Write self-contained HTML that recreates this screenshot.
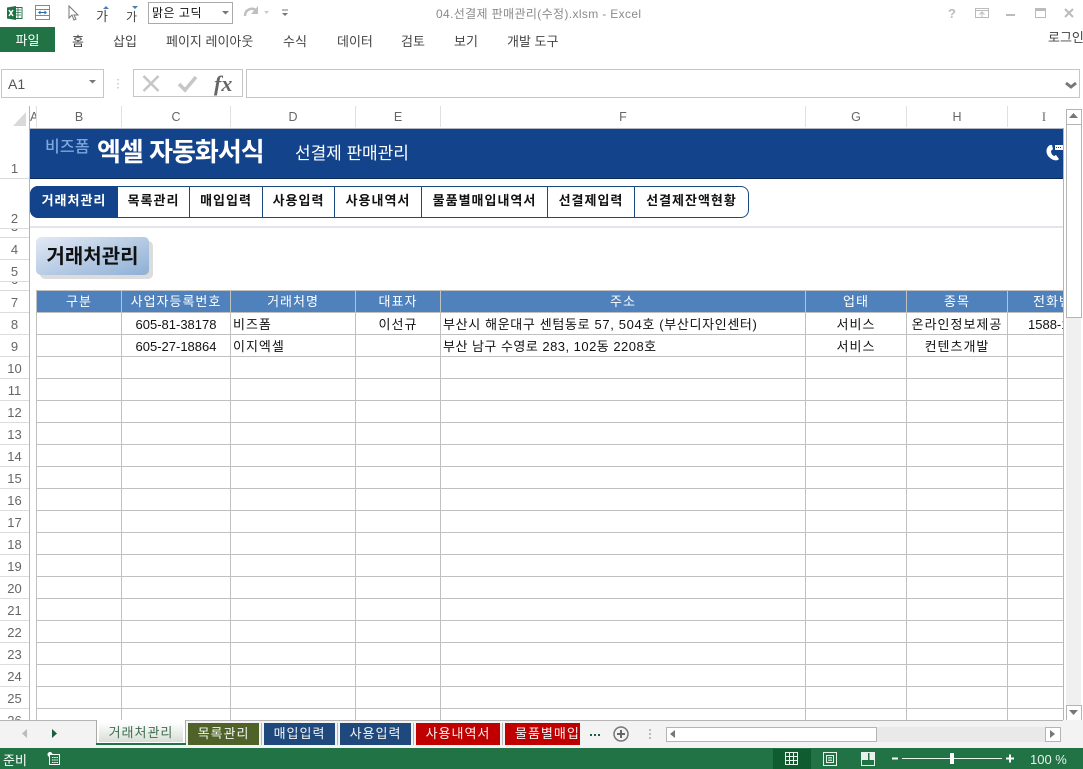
<!DOCTYPE html>
<html lang="ko"><head><meta charset="utf-8"><title>Excel</title>
<style>
html,body{margin:0;padding:0;background:#fff}
#p{position:relative;width:1083px;height:769px;overflow:hidden;background:#fff;font-family:"Liberation Sans","Noto Sans CJK KR",sans-serif;font-size:12px;color:#444}
#p div{position:absolute;white-space:nowrap}
.r{top:33px;font-size:13px;line-height:17px;color:#444}
.ch{top:106px;height:21px;line-height:22px;text-align:center;color:#666;font-size:12.5px;border-right:1px solid #e0e0e0;box-sizing:border-box}
.rh{left:0;width:29px;text-align:center;color:#666;font-size:13px;line-height:24px;height:22px;border-bottom:1px solid #dcdcdc;box-sizing:border-box}
.h{top:291px;height:21px;line-height:22px;background:#4f81bd;color:#fff;text-align:center;font-size:13px;letter-spacing:1px;box-sizing:border-box;overflow:hidden}
.c{height:21px;line-height:21px;color:#111;font-size:13px;letter-spacing:1px;overflow:hidden}
.d{letter-spacing:.55px}
.n{top:187px;height:30px;line-height:28px;text-align:center;font-weight:700;font-size:13px;color:#111;letter-spacing:1px;box-sizing:border-box;border-right:1px solid #1a4a80}
.t{top:723px;height:22px;line-height:22px;color:#f4f4f4;text-align:center;font-size:13px;letter-spacing:1px;overflow:hidden}
.g{top:290px;width:1px;height:430px;background:#c0c0c0}
.sp{top:723px;width:1px;height:22px;background:#b8b8b8}
</style></head><body><div id="p">

<!-- quick access -->
<svg style="position:absolute;left:0;top:0" width="300" height="27" xmlns="http://www.w3.org/2000/svg">
<path d="M14 7.500h8v11h-8z" fill="#fff" stroke="#217346"/><path d="M15 10h6M15 12.500h6M15 15h6M18 8v10" stroke="#217346" stroke-width=".8"/>
<path d="M7 7.500l9-1.500v14l-9-1.500z" fill="#1e7145"/>
<path d="M9 10l4 6M13 10l-4 6" stroke="#fff" stroke-width="1.500"/>
<rect x="35.500" y="5.500" width="14" height="14" fill="none" stroke="#888"/><path d="M35 9.500h15M35 15.500h15" stroke="#888"/><path d="M39 12.500h7" stroke="#2b6ca8"/><path d="M38 12.500l2.500-2v4zM47 12.500l-2.500-2v4z" fill="#2b6ca8"/>
<path d="M69 6v12l3-3 2 5 2-1-2-4h4z" fill="#fff" stroke="#777"/>
<path d="M106 6l3 3h-6zM135 9l3-3h-6z" fill="#4a7db5"/>
<path d="M245 16c0-6 6-9 11-6" fill="none" stroke="#c0c0c0" stroke-width="2.500"/><path d="M258 6v8h-7z" fill="#c0c0c0"/><path d="M264 11h5l-2.500 3z" fill="#ccc"/>
<path d="M282 10h6" stroke="#777"/><path d="M282 13h6l-3 3z" fill="#777"/>
</svg>
<div style="left:96px;top:8px;font-size:13px;line-height:17px;color:#444">가</div>
<div style="left:126px;top:9px;font-size:12px;line-height:16px;color:#444">가</div>
<div style="left:148px;top:2px;width:83px;height:20px;border:1px solid #aaa;background:#fff;line-height:21px;color:#111;font-size:12px;text-indent:3px;letter-spacing:.5px">맑은 고딕</div>
<svg style="position:absolute;left:222px;top:10px" width="8" height="6"><path d="M0 1h7l-3.500 3.500z" fill="#777"/></svg>
<div style="left:436px;top:6px;color:#8a8a8a;font-size:12px;line-height:16px;letter-spacing:.36px">04.선결제 판매관리(수정).xlsm - Excel</div>

<!-- window buttons -->
<svg style="position:absolute;left:940px;top:3px" width="143" height="22" xmlns="http://www.w3.org/2000/svg">
<text x="8" y="15" font-family="Liberation Sans" font-weight="700" font-size="13" fill="#bbb">?</text>
<rect x="35.500" y="5.500" width="13" height="9" fill="none" stroke="#bbb"/><path d="M35 7.500h14" stroke="#bbb"/><path d="M42 14v-4.500M39.500 11.500l2.500-2.500 2.500 2.500" fill="none" stroke="#bbb"/>
<path d="M66 12h9" stroke="#bbb" stroke-width="2"/>
<rect x="95.500" y="5.500" width="10" height="9" fill="none" stroke="#bbb"/><path d="M95 7h11" stroke="#bbb" stroke-width="2"/>
<path d="M125 6l8 8M133 6l-8 8" stroke="#bbb" stroke-width="2"/>
</svg>

<!-- ribbon tabs -->
<div style="left:0;top:27px;width:55px;height:25px;background:#217346;color:#fff;line-height:27px;text-align:center;font-size:13px">파일</div>
<div class="r" style="left:72px">홈</div>
<div class="r" style="left:113px">삽입</div>
<div class="r" style="left:166px">페이지 레이아웃</div>
<div class="r" style="left:283px">수식</div>
<div class="r" style="left:337px">데이터</div>
<div class="r" style="left:401px">검토</div>
<div class="r" style="left:454px">보기</div>
<div class="r" style="left:507px">개발 도구</div>
<div style="left:1048px;top:29px;font-size:13px;line-height:17px;color:#444;width:35px;overflow:hidden">로그인</div>

<!-- formula bar -->
<div style="left:1px;top:69px;width:101px;height:27px;border:1px solid #c6c6c6;line-height:28px;text-indent:6px;font-size:14px;color:#555">A1</div>
<svg style="position:absolute;left:88px;top:79px" width="10" height="6"><path d="M1 1h7l-3.500 3.500z" fill="#777"/></svg>
<svg style="position:absolute;left:110px;top:69px" width="135" height="29" xmlns="http://www.w3.org/2000/svg">
<path d="M8 10v1.500M8 14v1.500M8 18v1.500" stroke="#aaa"/>
<rect x="23.500" y=".5" width="109" height="27" fill="#fff" stroke="#c6c6c6"/>
<path d="M33.500 7l15 15M48.500 7l-15 15" stroke="#c6c6c6" stroke-width="2.500"/>
<path d="M69 15l6 6 11-13" fill="none" stroke="#c6c6c6" stroke-width="3.500"/>
<text x="104" y="22" font-family="Liberation Serif" font-style="italic" font-weight="700" font-size="22" fill="#666">fx</text>
</svg>
<div style="left:246px;top:69px;width:832px;height:27px;border:1px solid #c6c6c6"></div>
<svg style="position:absolute;left:1064px;top:81px" width="14" height="10"><path d="M2 2l5 4 5-4" fill="none" stroke="#777" stroke-width="3"/></svg>

<!-- column headers -->
<svg style="position:absolute;left:13px;top:111px" width="15" height="16"><path d="M13 1v14H0z" fill="#d9d9d9"/></svg>
<div style="left:29px;top:106px;width:1px;height:614px;background:#b5b5b5"></div>
<div class="ch" style="left:30px;width:7px;overflow:hidden;text-align:left">A</div>
<div class="ch" style="left:37px;width:85px">B</div>
<div class="ch" style="left:122px;width:109px">C</div>
<div class="ch" style="left:231px;width:125px">D</div>
<div class="ch" style="left:356px;width:85px">E</div>
<div class="ch" style="left:441px;width:365px">F</div>
<div class="ch" style="left:806px;width:101px">G</div>
<div class="ch" style="left:907px;width:101px">H</div>
<div class="ch" style="left:1008px;width:55px;border:0;text-align:right;padding-right:17px;font-family:'Liberation Serif'">I</div>

<!-- row headers -->
<div class="rh" style="top:128px;height:51px;line-height:81px">1</div>
<div class="rh" style="top:179px;height:50px;line-height:80px">2</div>
<div class="rh" style="top:229px;height:9px;line-height:0;overflow:hidden"><span style="position:relative;top:-2px">3</span></div>
<div class="rh" style="top:238px">4</div>
<div class="rh" style="top:260px">5</div>
<div class="rh" style="top:282px;height:9px;line-height:0;overflow:hidden"><span style="position:relative;top:-2px">6</span></div>
<div class="rh" style="top:291px;line-height:23px">7</div>
<div class="rh" style="top:313px">8</div><div class="rh" style="top:335px">9</div><div class="rh" style="top:357px">10</div><div class="rh" style="top:379px">11</div><div class="rh" style="top:401px">12</div><div class="rh" style="top:423px">13</div><div class="rh" style="top:445px">14</div><div class="rh" style="top:467px">15</div><div class="rh" style="top:489px">16</div><div class="rh" style="top:511px">17</div><div class="rh" style="top:533px">18</div><div class="rh" style="top:555px">19</div><div class="rh" style="top:577px">20</div><div class="rh" style="top:599px">21</div><div class="rh" style="top:621px">22</div><div class="rh" style="top:643px">23</div><div class="rh" style="top:665px">24</div><div class="rh" style="top:687px">25</div>
<div class="rh" style="top:709px;height:11px;overflow:hidden;border:0">26</div>

<!-- banner -->
<div style="left:30px;top:128px;width:1033px;height:51px;background:#13438a;border-top:1px solid #b0b8c4;border-bottom:1px solid #0b2a5c;box-sizing:border-box"></div>
<div style="left:45px;top:137px;font-size:16px;line-height:21px;color:#7da6dc;font-weight:500;letter-spacing:.2px">비즈폼</div>
<div style="left:97px;top:135px;font-size:26px;line-height:34px;color:#fff;font-weight:700;letter-spacing:-1px">엑셀 자동화서식</div>
<div style="left:295px;top:143px;font-size:17px;line-height:22px;color:#fff;letter-spacing:-.05px">선결제 판매관리</div>
<svg style="position:absolute;left:1045px;top:144px" width="18" height="19" xmlns="http://www.w3.org/2000/svg"><path d="M5 1C0 4 1 10 4 13s6 4 9 3l1-1-3-4-2 1c-2-1-3-3-3-5l2-2-1-4z" fill="#fff"/><rect x="10" y="1" width="8" height="5" fill="#fff"/><path d="M11 3.500h6" stroke="#13438a" stroke-dasharray="1 1"/></svg>

<!-- nav -->
<div style="left:30px;top:186px;width:719px;height:32px;border:1px solid #1a4a80;border-radius:8px;box-sizing:border-box;background:#fff"></div>
<div class="n" style="left:30px;top:186px;height:32px;width:88px;background:#13438a;color:#fff;border-radius:8px 0 0 8px;line-height:30px;border:0">거래처관리</div>
<div class="n" style="left:118px;width:72px">목록관리</div>
<div class="n" style="left:190px;width:73px">매입입력</div>
<div class="n" style="left:263px;width:72px">사용입력</div>
<div class="n" style="left:335px;width:87px">사용내역서</div>
<div class="n" style="left:422px;width:126px">물품별매입내역서</div>
<div class="n" style="left:548px;width:87px">선결제입력</div>
<div class="n" style="left:635px;width:113px;border:0">선결제잔액현황</div>
<div style="left:30px;top:226px;width:1033px;height:2px;background:#e4e4ea"></div>

<!-- title -->
<div style="left:40px;top:241px;width:113px;height:38px;background:#dcdcdc;border-radius:5px"></div>
<div style="left:36px;top:237px;width:113px;height:38px;background:linear-gradient(160deg,#e2e9f4,#8eafd6);border-radius:5px;line-height:41px;text-align:center;font-size:20px;font-weight:700;color:#111">거래처관리</div>

<!-- table grid -->
<div style="left:36px;top:313px;width:1027px;height:407px;background-image:repeating-linear-gradient(to bottom,transparent 0,transparent 21px,#c0c0c0 21px,#c0c0c0 22px)"></div>
<div class="g" style="left:36px"></div>
<div class="g" style="left:121px"></div>
<div class="g" style="left:230px"></div>
<div class="g" style="left:355px"></div>
<div class="g" style="left:440px"></div>
<div class="g" style="left:805px"></div>
<div class="g" style="left:906px"></div>
<div class="g" style="left:1007px"></div>
<div style="left:36px;top:290px;width:1027px;height:1px;background:#c0c0c0"></div>
<div style="left:36px;top:312px;width:1027px;height:1px;background:#c0c0c0"></div>
<div style="left:1063px;top:128px;width:1px;height:592px;background:#b5b5b5"></div>

<div class="h" style="left:37px;width:84px">구분</div>
<div class="h" style="left:122px;width:108px">사업자등록번호</div>
<div class="h" style="left:231px;width:124px">거래처명</div>
<div class="h" style="left:356px;width:84px">대표자</div>
<div class="h" style="left:441px;width:364px">주소</div>
<div class="h" style="left:806px;width:100px">업태</div>
<div class="h" style="left:907px;width:100px">종목</div>
<div class="h" style="left:1008px;width:55px;text-align:left;padding-left:25px">전화번호</div>

<div class="c" style="left:122px;top:314px;width:108px;text-align:center;letter-spacing:0">605-81-38178</div>
<div class="c" style="left:233px;top:314px">비즈폼</div>
<div class="c" style="left:356px;top:314px;width:84px;text-align:center">이선규</div>
<div class="c d" style="left:443px;top:314px;letter-spacing:.65px">부산시 해운대구 센텀동로 57, 504호 (부산디자인센터)</div>
<div class="c" style="left:806px;top:314px;width:100px;text-align:center">서비스</div>
<div class="c" style="left:907px;top:314px;width:100px;text-align:center">온라인정보제공</div>
<div class="c" style="left:1028px;top:314px;width:35px;letter-spacing:0">1588-1234</div>
<div class="c" style="left:122px;top:336px;width:108px;text-align:center;letter-spacing:0">605-27-18864</div>
<div class="c" style="left:233px;top:336px">이지엑셀</div>
<div class="c d" style="left:443px;top:336px;letter-spacing:.48px">부산 남구 수영로 283, 102동 2208호</div>
<div class="c" style="left:806px;top:336px;width:100px;text-align:center">서비스</div>
<div class="c" style="left:907px;top:336px;width:100px;text-align:center">컨텐츠개발</div>

<!-- vertical scrollbar -->
<div style="left:1064px;top:106px;width:19px;height:614px;background:#fff"></div>
<div style="left:1066px;top:124px;width:15px;height:581px;background:#f0f0f0"></div>
<div style="left:1066px;top:109px;width:14px;height:14px;border:1px solid #b4b4b4;background:#fff"></div>
<svg style="position:absolute;left:1069px;top:113px" width="10" height="6"><path d="M4.500 0l4.500 5H0z" fill="#777"/></svg>
<div style="left:1066px;top:124px;width:14px;height:192px;border:1px solid #b4b4b4;background:#fff"></div>
<div style="left:1066px;top:705px;width:14px;height:14px;border:1px solid #b4b4b4;background:#fff"></div>
<svg style="position:absolute;left:1069px;top:710px" width="10" height="6"><path d="M0 0h9L4.500 5z" fill="#777"/></svg>

<!-- sheet tabs -->
<div style="left:0;top:720px;width:1083px;height:28px;background:#f3f3f3"></div>
<div style="left:0;top:720px;width:1063px;height:1px;background:#b5b5b5"></div>
<svg style="position:absolute;left:20px;top:728px" width="40" height="12"><path d="M7 1v9L2 5.500z" fill="#bbb"/><path d="M32 1v9l5-4.500z" fill="#17623a"/></svg>
<div style="left:96px;top:720px;width:90px;height:25px;background:#fff;border-left:1px solid #aaa;border-right:1px solid #aaa;box-sizing:border-box"></div>
<div class="t" style="left:99px;top:722px;width:84px;height:20px;line-height:22px;background:linear-gradient(#fff,#d7dfd5);color:#3f6b52">거래처관리</div>
<div style="left:96px;top:743px;width:90px;height:2px;background:#217346"></div>
<div class="t" style="left:188px;width:71px;background:#4f6228">목록관리</div>
<div class="sp" style="left:261px"></div>
<div class="t" style="left:264px;width:71px;background:#1f497d">매입입력</div>
<div class="sp" style="left:337px"></div>
<div class="t" style="left:340px;width:71px;background:#1f497d">사용입력</div>
<div class="sp" style="left:413px"></div>
<div class="t" style="left:416px;width:84px;background:#c00000">사용내역서</div>
<div class="sp" style="left:502px"></div>
<div class="t" style="left:505px;width:75px;background:#c00000;text-align:left;text-indent:10px">물품별매입</div>
<svg style="position:absolute;left:586px;top:725px" width="80" height="20" xmlns="http://www.w3.org/2000/svg">
<path d="M4 10h2M8 10h2M12 10h2" stroke="#17623a" stroke-width="2"/>
<circle cx="35" cy="9" r="7" fill="none" stroke="#777" stroke-width="1.500"/><path d="M31 9h8M35 5v8" stroke="#666" stroke-width="2"/>
<path d="M64 4v2M64 8v2M64 12v2" stroke="#aaa" stroke-width="1.500"/>
</svg>
<!-- horizontal scrollbar -->
<div style="left:666px;top:727px;width:394px;height:15px;background:#e9e9e9"></div>
<div style="left:666px;top:727px;width:14px;height:13px;border:1px solid #b4b4b4;background:#fff"></div>
<svg style="position:absolute;left:670px;top:730px" width="7" height="9"><path d="M5 0v8L0 4z" fill="#777"/></svg>
<div style="left:681px;top:727px;width:195px;height:13px;border:1px solid #b4b4b4;border-left:0;background:#fff"></div>
<div style="left:1045px;top:727px;width:14px;height:13px;border:1px solid #b4b4b4;background:#fff"></div>
<svg style="position:absolute;left:1050px;top:730px" width="7" height="9"><path d="M0 0v8l5-4z" fill="#777"/></svg>

<!-- status bar -->
<div style="left:0;top:748px;width:1083px;height:21px;background:#217346"></div>
<div style="left:3px;top:752px;color:#fff;font-size:13px;line-height:17px">준비</div>
<svg style="position:absolute;left:46px;top:751px" width="16" height="16" xmlns="http://www.w3.org/2000/svg"><circle cx="4" cy="3.500" r="2.500" fill="#fff"/><rect x="3.500" y="3.500" width="10" height="10" fill="#217346" stroke="#fff"/><path d="M6 6.500h6M6 9h6M6 11.500h6" stroke="#fff" stroke-dasharray="1.500 .7"/></svg>
<div style="left:773px;top:749px;width:38px;height:20px;background:#0f5c30"></div>
<svg style="position:absolute;left:780px;top:749px" width="300" height="20" xmlns="http://www.w3.org/2000/svg">
<path d="M5.500 3.500h12v12h-12zM5 7.500h13M5 11.500h13M9.500 3v13M13.500 3v13" fill="none" stroke="#e6f2ea"/>
<rect x="43.500" y="3.500" width="13" height="13" fill="none" stroke="#e6f2ea"/><rect x="46.500" y="6.500" width="7" height="7" fill="none" stroke="#e6f2ea"/><path d="M48 8.500h4M48 10h4M48 11.500h4" stroke="#e6f2ea" stroke-width=".8"/>
<rect x="81.500" y="3.500" width="13" height="13" fill="none" stroke="#e6f2ea"/><path d="M82 3h6v8h-6zM89.500 3h5v8h-5z" fill="#e6f2ea"/>
<path d="M112 9.500h6" stroke="#fff" stroke-width="2"/><path d="M122 9.500h100" stroke="#e6f2ea"/>
<rect x="170" y="4" width="4" height="11" fill="#fff"/>
<path d="M226 9.500h8M230 5.500v8" stroke="#fff" stroke-width="2"/>
</svg>
<div style="left:1030px;top:751px;color:#e6f2ea;font-size:13px;line-height:18px">100 %</div>
</div></body></html>
